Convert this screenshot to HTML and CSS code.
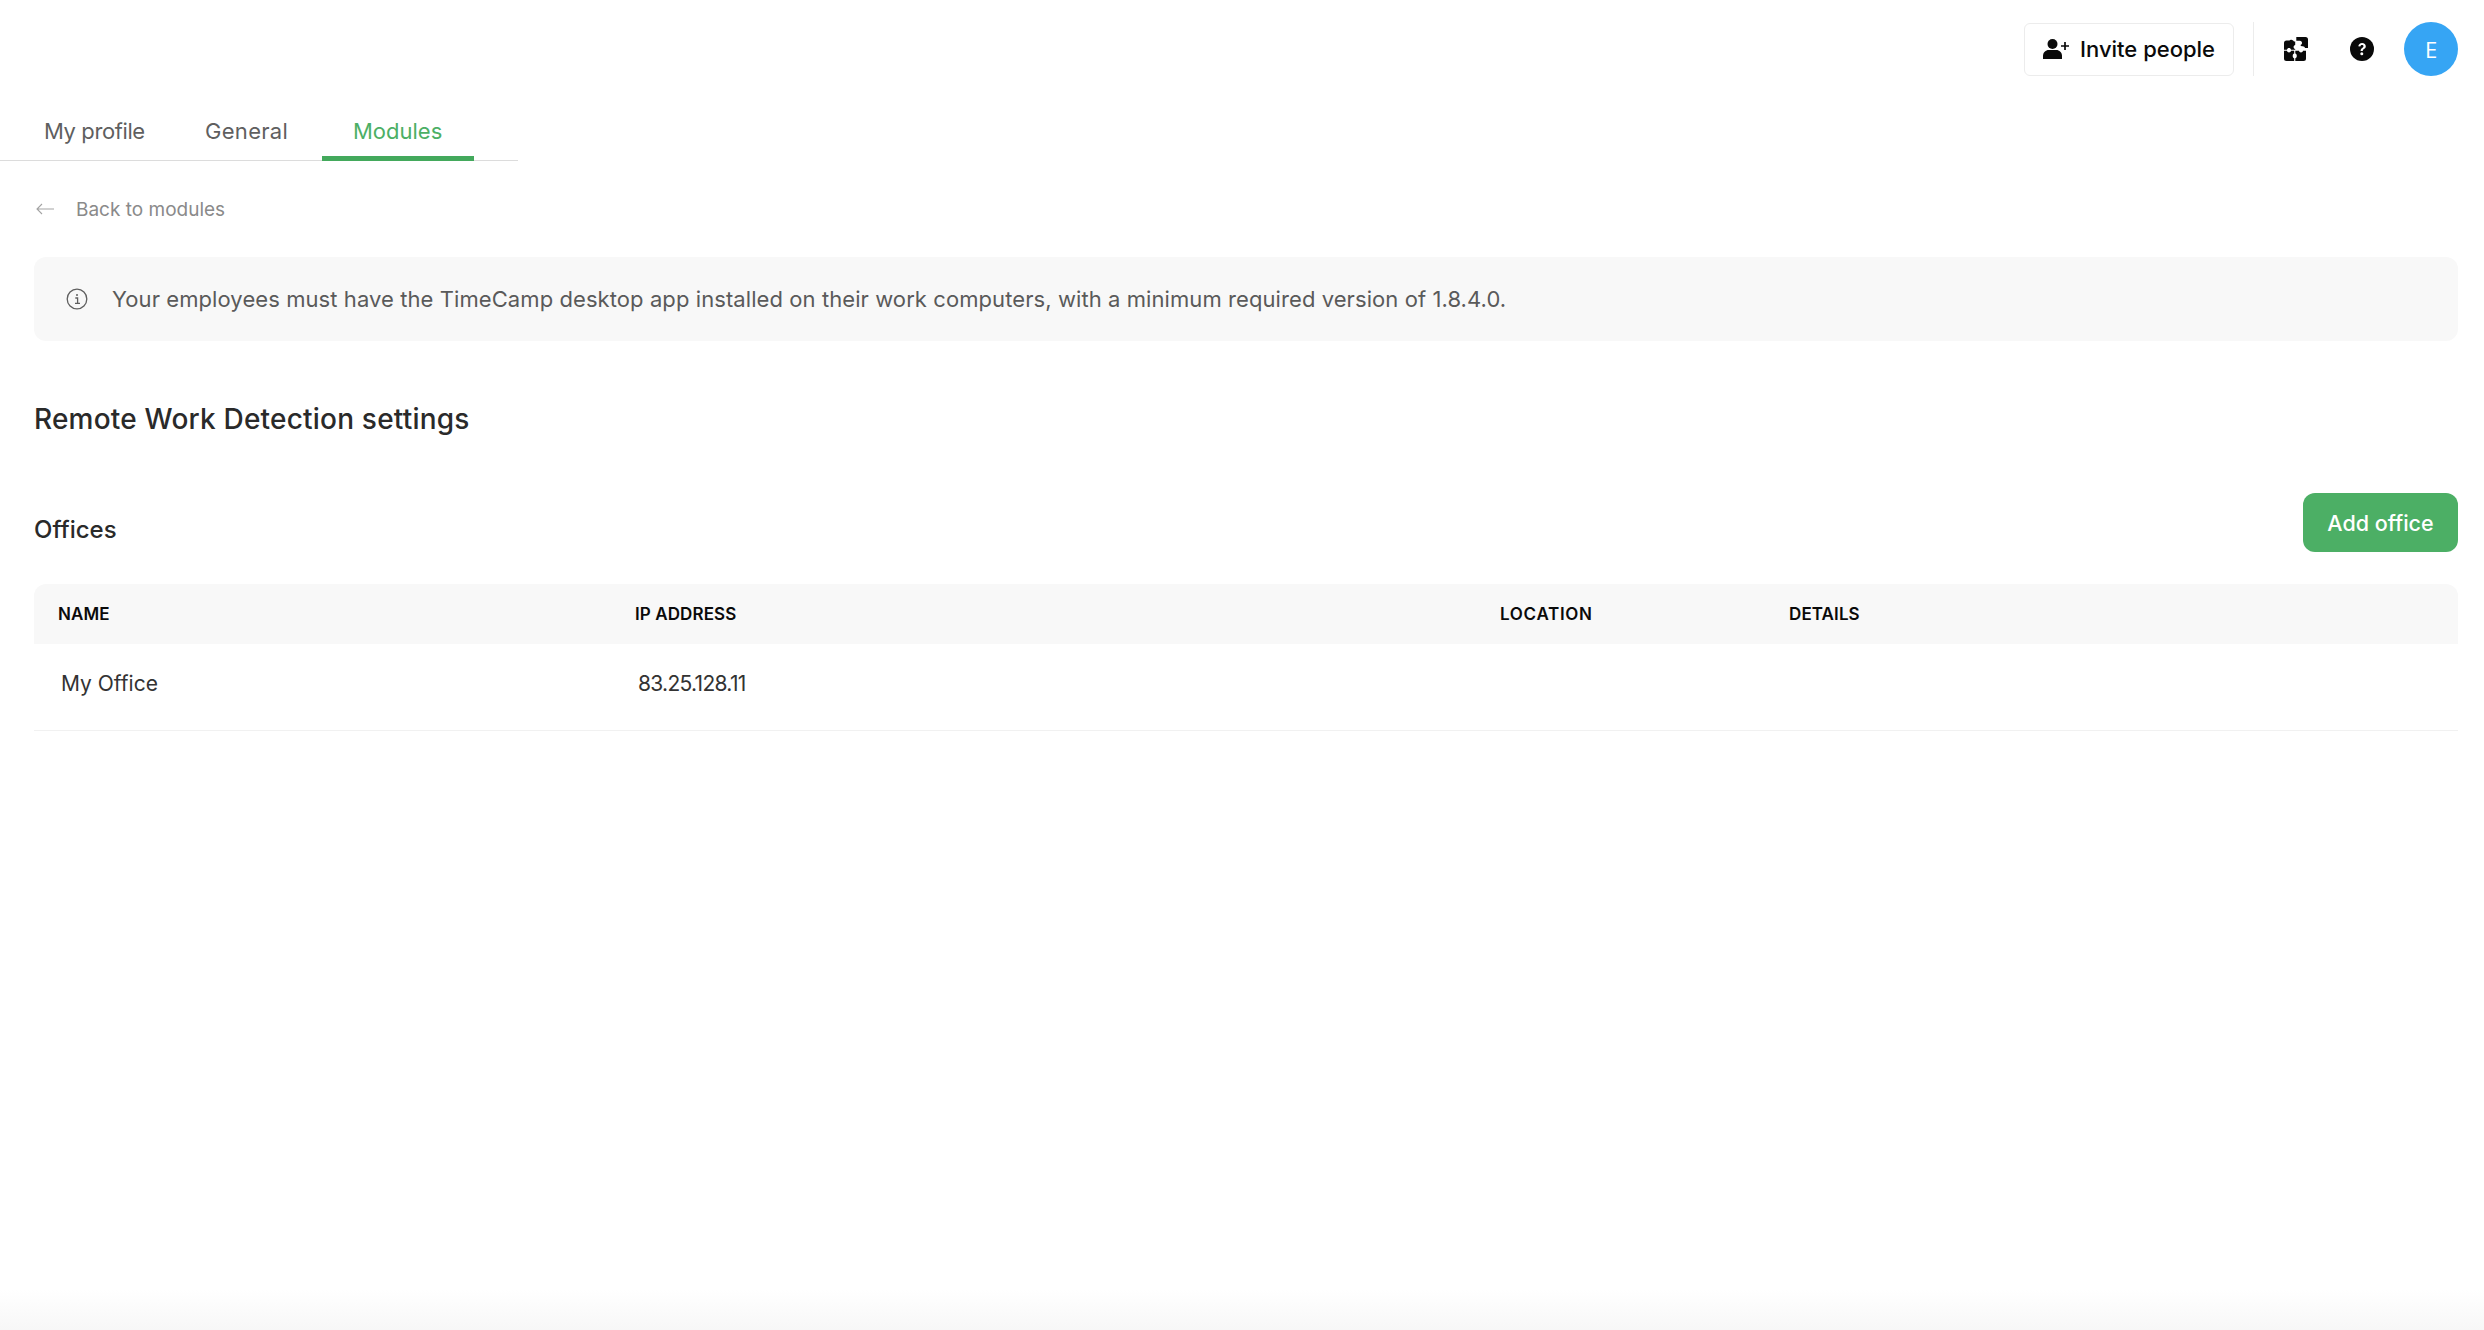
FILE: index.html
```html
<!DOCTYPE html>
<html lang="en">
<head>
<meta charset="utf-8">
<title>Remote Work Detection settings</title>
<link rel="stylesheet" href="styles.css">
</head>
<body>
<header class="topbar">
  <button class="invite">
    <svg class="invite-icon" viewBox="0 0 26 20" width="26" height="20"><circle cx="9.5" cy="5" r="5"/><path d="M0 20v-3.2C0 13.6 2.6 11 5.8 11h7.400c3.200 0 5.800 2.600 5.800 5.800V20z"/><path d="M18 7h8M22 3v8" fill="none" stroke="#0a0a0a" stroke-width="1.700"/></svg>
    <span>Invite people</span>
  </button>
  <span class="divider"></span>
  <svg class="tool-icon puzzle" viewBox="0 0 24 24" width="24" height="24"><path d="M0 12.800V6a2.500 2.500 0 0 1 2.500-2.500H5.500C6 2.800 7 2.500 8 3s1.500.5 2 1.500h1.200V8c-.9.200-1.600.9-1.600 2s.7 1.900 1.600 2.100v.7H7C6.800 11.600 6 11 5 11s-1.800.6-2 1.800z"/><path d="M12.300 0h9.200A2.500 2.500 0 0 1 24 2.500V11h-3c-.2-1.100-1.100-1.800-2.200-1.800-1.300 0-2.100-.3-2.400-1.200 1-.3 1.600-1 1.600-2.100s-.8-1.900-2.100-2.100h-3.600z"/><path d="M0 13.800h3c.2 1.100 1 1.700 2 1.700s1.800-.6 2-1.700h3.200v2.800c-.9.300-1.500 1.200-1.500 2.300s.6 2 1.500 2.300V24H2.500A2.500 2.500 0 0 1 0 21.500z"/><path d="M11.300 13.800H15c.2 1.100 1 1.700 2 1.700s1.800-.6 2-1.700h3v7.700a2.500 2.500 0 0 1-2.500 2.500h-8.200v-2.800c.9-.3 1.500-1.200 1.500-2.300s-.6-2-1.500-2.300z"/></svg>
  <svg class="tool-icon help" viewBox="0 0 24 24" width="24" height="24"><circle cx="12" cy="12" r="12"/><path d="M8.300 9.300C8.500 7.300 10 6 12.100 6c2.200 0 3.700 1.300 3.700 3.200 0 1.400-.7 2.200-1.800 2.900-.9.600-1.200 1-1.200 1.900h-2.200c0-1.600.5-2.300 1.700-3.100.8-.5 1.200-1 1.200-1.600 0-.8-.6-1.300-1.500-1.300-1 0-1.600.6-1.700 1.500z" fill="#fff"/><circle cx="11.800" cy="16.800" r="1.500" fill="#fff"/></svg>
  <div class="avatar">E</div>
</header>

<nav class="tabs">
  <a class="tab profile">My profile</a>
  <a class="tab general">General</a>
  <a class="tab active">Modules</a>
</nav>

<main class="content">
  <a class="back">
    <svg viewBox="0 0 18 12" width="18" height="12"><path d="M18 6H1M6 1 1 6l5 5" fill="none" stroke="#a3a3a3" stroke-width="1.100"/></svg>
    <span>Back to modules</span>
  </a>

  <div class="alert">
    <svg viewBox="0 0 22 22" width="22" height="22"><circle cx="11" cy="11" r="9.800" fill="none" stroke="#5f5f5f" stroke-width="1.300"/><path d="M9.300 10h2.300v5M9 15.300h5" fill="none" stroke="#5f5f5f" stroke-width="1.300"/><circle cx="11" cy="7" r="1" fill="#5f5f5f"/></svg>
    <span>Your employees must have the TimeCamp desktop app installed on their work computers, with a minimum required version of 1.8.4.0.</span>
  </div>

  <h1 class="title">Remote Work Detection settings</h1>

  <section class="offices-head">
    <h2 class="subtitle">Offices</h2>
    <button class="add">Add office</button>
  </section>

  <div class="table">
    <div class="row head">
      <span>NAME</span><span>IP ADDRESS</span><span class="location">LOCATION</span><span>DETAILS</span>
    </div>
    <div class="row body">
      <span>My Office</span><span class="ip">83.25.128.11</span><span></span><span></span>
    </div>
  </div>
</main>
</body>
</html>
```

FILE: styles.css
```css
* { box-sizing: border-box; }
html, body { height: 100%; }
body {
  margin: 0;
  padding-top: 22px;
  font-family: Inter, "Noto Sans", sans-serif;
  color: #222;
  background: linear-gradient(rgba(247,247,247,0), #f7f7f7) bottom / 100% 40px no-repeat, #fff;
}
.topbar {
  display: flex;
  align-items: center;
  justify-content: flex-end;
  height: 54px;
  padding-right: 26px;
}
.invite {
  display: flex;
  align-items: center;
  gap: 11px;
  width: 210px;
  height: 53px;
  padding: 0 0 0 18px;
  background: #fff;
  border: 1px solid #ececec;
  border-radius: 6px;
  font: 500 22px Inter, sans-serif;
  color: #0a0a0a;
}
.invite-icon { fill: #0a0a0a; }
.divider { width: 1px; height: 54px; background: #ececec; margin: 0 30px 0 19px; }
.tool-icon { fill: #0a0a0a; }
.help { margin-left: 42px; }
.avatar {
  width: 54px; height: 54px;
  margin-left: 30px;
  border-radius: 50%;
  background: #36a5f4;
  color: #fff;
  display: flex; align-items: center; justify-content: center;
  font: 400 22px "Open Sans", sans-serif;
}
.tabs {
  display: grid;
  grid-template-columns: 160px 148px 152px;
  width: 518px;
  height: 60px;
  margin-top: 25px;
  padding-left: 14px;
  border-bottom: 1px solid #dcdcdc;
}
.tab {
  height: 60px;
  padding: 17px 0 0 30px;
  font-size: 22px;
  color: #5f5f5f;
}
.tab.profile { letter-spacing: -.4px; }
.tab.general { padding-left: 31px; letter-spacing: .3px; }
.tab.active { padding-left: 31px; color: #4caf65; border-bottom: 5px solid #43a95c; }
.content { padding: 0 26px 0 34px; }
.back {
  display: flex;
  align-items: center;
  gap: 22px;
  height: 24px;
  margin-top: 36px;
  padding-left: 2px;
  font-size: 19px;
  color: #8a8a8a;
}
.alert {
  display: flex;
  align-items: center;
  gap: 24px;
  height: 84px;
  margin-top: 36px;
  padding-left: 32px;
  background: #f8f8f8;
  border-radius: 12px;
  font-size: 22px;
  letter-spacing: .08px;
  color: #5a5a5a;
}
.title { margin: 59px 0 0; font-size: 28px; font-weight: 500; letter-spacing: .2px; line-height: 38px; color: #2a2a2a; }
.offices-head { display: flex; justify-content: space-between; align-items: center; height: 59px; margin-top: 55px; }
.subtitle { margin: 14px 0 0; font-size: 24px; font-weight: 500; color: #2a2a2a; }
.add {
  width: 155px; height: 59px;
  background: #4caf65;
  border: 0;
  border-radius: 12px;
  color: #fff;
  font: 500 21.5px Inter, sans-serif;
}
.table { margin-top: 32px; }
.row { display: grid; grid-template-columns: 577px 865px 289px 1fr; align-items: center; }
.row.head {
  height: 60px;
  padding-left: 24px;
  background: #f8f8f8;
  border-radius: 12px 12px 0 0;
  font-size: 17px;
  font-weight: 600;
  letter-spacing: .1px;
  color: #0a0a0a;
}
.location { letter-spacing: .7px; }
.row.body {
  height: 87px;
  padding: 0 0 8px 27px;
  border-bottom: 1px solid #f1f1f1;
  font-size: 21px;
  color: #333;
}
.ip { letter-spacing: -.7px; }
```
